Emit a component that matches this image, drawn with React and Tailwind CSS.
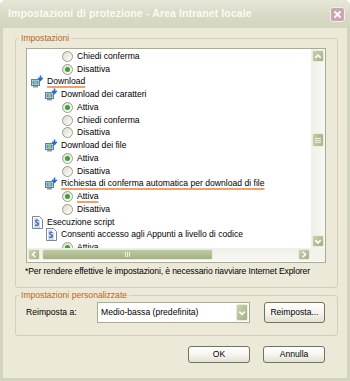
import React from "react";

const FONT = "font-['Liberation_Sans',Arial,sans-serif]";

function Radio({ checked }) {
  return (
    <span className="flex h-[11px] w-[11px] shrink-0 items-center justify-center rounded-full border border-[#9c9c88] bg-linear-to-br from-[#dcdcd0] to-[#ffffff]">
      {checked && <span className="h-[5px] w-[5px] rounded-full bg-[#3f9e3a]" />}
    </span>
  );
}

function DlIcon() {
  return (
    <svg width="13" height="13" viewBox="0 0 13 13" className="shrink-0">
      <rect x="0.5" y="4.5" width="8" height="6" fill="#e8eef5" stroke="#6b7c92" />
      <rect x="1.5" y="5.5" width="6" height="4" fill="#4a8fd0" />
      <circle cx="4.5" cy="7.5" r="1.7" fill="#8cc870" />
      <rect x="2" y="11" width="5" height="1.5" fill="#8b9aaa" />
      <path d="M9.5 0.5v4.2 M7.3 2.8l2.2 2.4 2.2-2.4" stroke="#1f6fd0" strokeWidth="1.6" fill="none" />
    </svg>
  );
}

function ScriptIcon() {
  return (
    <svg width="13" height="13" viewBox="0 0 13 13" className="shrink-0">
      <path d="M1.5 0.5h7l3 3v9h-10z" fill="#ffffff" stroke="#7a8799" />
      <path d="M3 3h4 M3 5h6 M3 7h6 M3 9h6 M3 11h6" stroke="#9aa6b6" strokeWidth="0.8" />
      <path d="M7.5 4.5c-1.5-1-3.5 0-2.5 1.4 1 1.2 3 1 2.4 2.6-0.6 1.2-2.4 1-3.1 0.2" stroke="#2a64c8" strokeWidth="1.3" fill="none" />
    </svg>
  );
}

function Row({ level, kind, checked, text, ul }) {
  const pad = level === 1 ? "pl-[4px] gap-[3px]" : level === 2 ? "pl-[18px] gap-[3px]" : "pl-[35px] gap-[4px]";
  return (
    <div className={`flex h-[12.75px] shrink-0 items-center whitespace-nowrap ${pad}`}>
      {kind === "radio" && <Radio checked={checked} />}
      {kind === "dl" && <DlIcon />}
      {kind === "script" && <ScriptIcon />}
      <span className={ul ? "underline decoration-[#f0a06a] decoration-2 underline-offset-[2px]" : ""}>{text}</span>
    </div>
  );
}

const rows = [
  { level: 3, kind: "radio", checked: false, text: "Chiedi conferma" },
  { level: 3, kind: "radio", checked: true, text: "Disattiva" },
  { level: 1, kind: "dl", text: "Download", ul: true },
  { level: 2, kind: "dl", text: "Download dei caratteri" },
  { level: 3, kind: "radio", checked: true, text: "Attiva" },
  { level: 3, kind: "radio", checked: false, text: "Chiedi conferma" },
  { level: 3, kind: "radio", checked: false, text: "Disattiva" },
  { level: 2, kind: "dl", text: "Download dei file" },
  { level: 3, kind: "radio", checked: true, text: "Attiva" },
  { level: 3, kind: "radio", checked: false, text: "Disattiva" },
  { level: 2, kind: "dl", text: "Richiesta di conferma automatica per download di file", ul: true },
  { level: 3, kind: "radio", checked: true, text: "Attiva", ul: true },
  { level: 3, kind: "radio", checked: false, text: "Disattiva" },
  { level: 1, kind: "script", text: "Esecuzione script" },
  { level: 2, kind: "script", text: "Consenti accesso agli Appunti a livello di codice" },
  { level: 3, kind: "radio", checked: true, text: "Attiva" },
];

const arrows = {
  up: "M2.5 7l3-3 3 3",
  down: "M2.5 4l3 3 3-3",
  left: "M7 2.5l-3 3 3 3",
  right: "M4 2.5l3 3-3 3",
};

function SBtn({ dir, h = "h-[12px]" }) {
  return (
    <div className={`flex w-[12px] ${h} shrink-0 items-center justify-center rounded-[2px] border border-[#e9ecdc] bg-linear-to-br from-[#c9d3ad] to-[#a3b184]`}>
      <svg width="11" height="11" viewBox="0 0 11 11">
        <path d={arrows[dir]} stroke="#ffffff" strokeWidth="1.8" fill="none" />
      </svg>
    </div>
  );
}

function XPButton({ children, className = "" }) {
  return (
    <div className={`flex items-center justify-center rounded-[3px] border border-[#6f755c] bg-linear-to-b from-[#ffffff] via-[#f6f5ef] to-[#e3e1d2] text-black ${className}`}>
      {children}
    </div>
  );
}

export default function App() {
  return (
    <div className={`${FONT} flex h-[381px] w-[350px] flex-col overflow-hidden rounded-t-[6px] bg-[#d2d4bf] text-[8.6px] text-black`}>
      {/* Title bar */}
      <div className="flex h-[28px] shrink-0 items-center justify-between bg-linear-to-b from-[#e6e7d7] via-[#d9dac6] to-[#d3d5bf] pl-[8px] pr-[5px]">
        <span className="text-[10.5px] font-bold tracking-[0.1px] text-[#fbfbf6]">Impostazioni di protezione - Area Intranet locale</span>
        <div className="flex h-[15px] w-[15px] items-center justify-center rounded-[3px] border border-[#f4ecee] bg-[#cba6ae]">
          <svg width="11" height="11" viewBox="0 0 11 11">
            <path d="M2.5 2.5l6 6 M8.5 2.5l-6 6" stroke="#ffffff" strokeWidth="1.8" />
          </svg>
        </div>
      </div>

      {/* Body */}
      <div className="mx-[3px] mb-[3px] flex flex-1 flex-col bg-[#ece9d8]">
        {/* Group 1 */}
        <fieldset className="ml-[12px] mt-[5px] w-[323px] rounded-[3px] border border-[#d0d0bf] pb-[10px]">
          <legend className="ml-[3px] px-[2px] leading-[11px] text-[#b8661c]">Impostazioni</legend>
          <div className="ml-[10px] mt-[4px] flex h-[215px] w-[300px] flex-col border border-[#a8ac92] bg-white">
            <div className="flex h-[199px]">
              <div className="flex w-[284px] flex-col overflow-hidden pt-[1px]">
                {rows.map((r, i) => (
                  <Row key={i} {...r} />
                ))}
              </div>
              <div className="flex w-[14px] flex-col bg-linear-to-r from-[#f0efe8] to-[#f8f7f3] p-[1px]">
                <SBtn dir="up" />
                <div className="mt-[71px] flex h-[14px] w-[12px] flex-col items-center justify-center gap-[1px] rounded-[2px] border border-[#e9ecdc] bg-linear-to-r from-[#c3cea6] to-[#a9b78a]">
                  <span className="h-[1px] w-[6px] bg-[#eef2e0]" />
                  <span className="h-[1px] w-[6px] bg-[#eef2e0]" />
                  <span className="h-[1px] w-[6px] bg-[#eef2e0]" />
                </div>
                <div className="flex-1" />
                <SBtn dir="down" />
              </div>
            </div>
            <div className="flex h-[13px]">
              <div className="flex w-[284px] items-center bg-linear-to-b from-[#f0efe8] to-[#f8f7f3] p-[1px]">
                <SBtn dir="left" h="h-[11px]" />
                <div className="ml-[2px] flex h-[11px] w-[171px] items-center justify-center gap-[1px] rounded-[2px] border border-[#e9ecdc] bg-linear-to-b from-[#bfcaa2] to-[#a3b184]">
                  <span className="h-[5px] w-[1px] bg-[#eef2e0]" />
                  <span className="h-[5px] w-[1px] bg-[#eef2e0]" />
                  <span className="h-[5px] w-[1px] bg-[#eef2e0]" />
                </div>
                <div className="flex-1" />
                <SBtn dir="right" h="h-[11px]" />
              </div>
              <div className="w-[14px] bg-[#f3f2ec]" />
            </div>
          </div>
          <div className="ml-[9px] mt-[3px] whitespace-nowrap leading-[11px] tracking-[-0.12px]">
            *Per rendere effettive le impostazioni, è necessario riavviare Internet Explorer
          </div>
        </fieldset>

        {/* Group 2 */}
        <fieldset className="ml-[12px] mt-[2px] w-[323px] rounded-[3px] border border-[#d0d0bf] pb-[12px]">
          <legend className="ml-[3px] px-[2px] leading-[11px] text-[#b8661c]">Impostazioni personalizzate</legend>
          <div className="ml-[10px] mt-[1px] flex h-[21px] items-center">
            <span className="w-[71px]">Reimposta a:</span>
            <div className="flex h-[21px] w-[153px] items-center justify-between border border-[#a8ac92] bg-white pl-[3px] pr-[1px]">
              <span>Medio-bassa (predefinita)</span>
              <div className="flex h-[17px] w-[12px] items-center justify-center rounded-[2px] border border-[#e9ecdc] bg-linear-to-br from-[#c9d3ad] to-[#a3b184]">
                <svg width="10" height="10" viewBox="0 0 11 11">
                  <path d={arrows.down} stroke="#ffffff" strokeWidth="1.8" fill="none" />
                </svg>
              </div>
            </div>
            <XPButton className="ml-[14px] h-[21px] w-[61px]">Reimposta...</XPButton>
          </div>
        </fieldset>

        {/* Buttons */}
        <div className="mt-[10px] flex justify-end gap-[13px] pr-[22px]">
          <XPButton className="h-[17px] w-[62px]">OK</XPButton>
          <XPButton className="h-[17px] w-[62px]">Annulla</XPButton>
        </div>
      </div>
    </div>
  );
}
